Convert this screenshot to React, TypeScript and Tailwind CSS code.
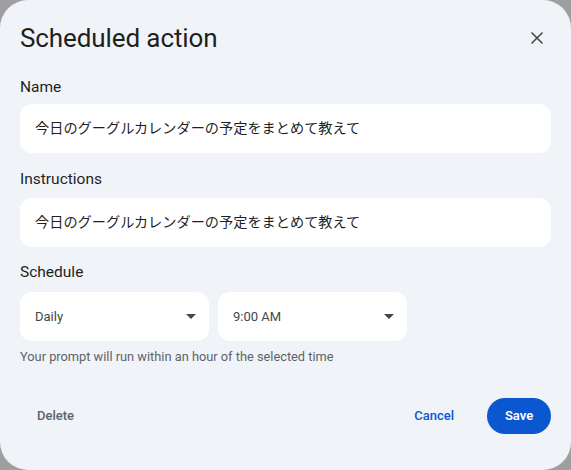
import { X } from "lucide-react";

const font = { fontFamily: '"Roboto", "Noto Sans CJK JP", sans-serif' };

function Caret() {
  return (
    <svg width="10" height="5" viewBox="0 0 10 5" className="shrink-0">
      <path d="M0 0h10L5 5z" fill="#444746" />
    </svg>
  );
}

function Field({ value }: { value: string }) {
  return (
    <div className="h-[49px] w-full rounded-xl bg-white flex items-center px-[15px] text-[14.2px] text-[#1f1f1f]">
      {value}
    </div>
  );
}

function Select({ value }: { value: string }) {
  return (
    <div className="h-[49px] w-[189px] rounded-xl bg-white flex items-center justify-between pl-[15px] pr-[13px] text-[13px] text-[#444746]">
      <span>{value}</span>
      <Caret />
    </div>
  );
}

export default function App() {
  return (
    <div className="w-[571px] h-[470px] bg-[#9f9f9f]" style={font}>
      <div className="w-full h-full bg-[#f0f4f9] rounded-[28px] px-5 pt-[22px] flex flex-col">
        <div className="flex items-center justify-between h-[32px]">
          <h1 className="text-[26px] text-[#1f1f1f] leading-8 tracking-[-0.1px]">Scheduled action</h1>
          <button className="w-8 h-8 flex items-center justify-center -mr-[2px] text-[#444746]">
            <X size={20} strokeWidth={2} />
          </button>
        </div>

        <label className="mt-[23px] text-[15.5px] text-[#1f1f1f] leading-5">Name</label>
        <div className="mt-[7px]">
          <Field value="今日のグーグルカレンダーの予定をまとめて教えて" />
        </div>

        <label className="mt-[16px] text-[15.5px] text-[#1f1f1f] leading-5">Instructions</label>
        <div className="mt-[9px]">
          <Field value="今日のグーグルカレンダーの予定をまとめて教えて" />
        </div>

        <label className="mt-[15px] text-[15.5px] text-[#1f1f1f] leading-5">Schedule</label>
        <div className="mt-[10px] flex gap-[9px]">
          <Select value="Daily" />
          <Select value="9:00 AM" />
        </div>
        <p className="mt-[8px] text-[12.8px] text-[#5f6368] leading-4">
          Your prompt will run within an hour of the selected time
        </p>

        <div className="mt-[33px] flex items-center">
          <button className="h-9 px-[17px] text-[13px] font-medium text-[#5f6368]">Delete</button>
          <div className="flex-1" />
          <button className="h-9 px-[17px] text-[13px] font-medium text-[#0b57d0]">Cancel</button>
          <button className="ml-[16px] h-9 w-[64px] rounded-full bg-[#0b57d0] text-[13px] font-semibold text-white">
            Save
          </button>
        </div>
      </div>
    </div>
  );
}
